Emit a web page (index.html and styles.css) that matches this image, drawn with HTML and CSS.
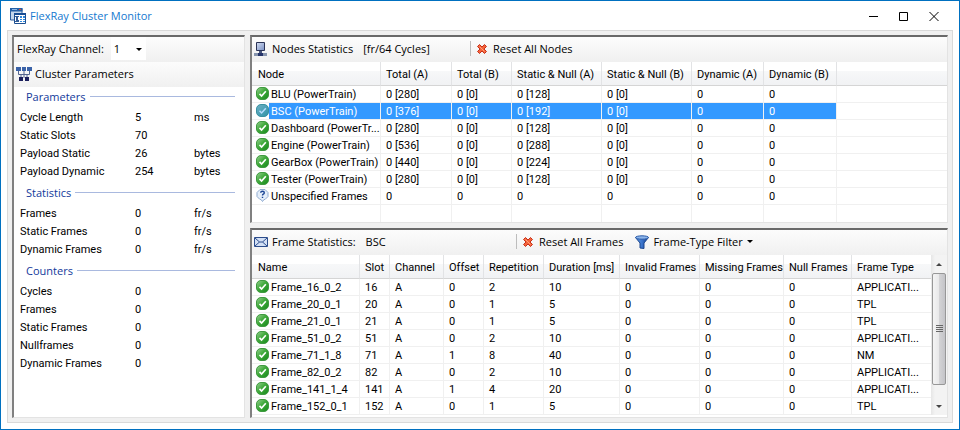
FILE: index.html
```html
<!DOCTYPE html>
<html lang="en">
<head>
<meta charset="utf-8">
<title>FlexRay Cluster Monitor</title>
<link rel="stylesheet" href="styles.css">
</head>
<body>
<svg class="sprite" aria-hidden="true">
  <defs>
    <linearGradient id="green" x1="0" y1="0" x2="1" y2="1"><stop offset="0" stop-color="#9ad295"/><stop offset=".45" stop-color="#41aa3c"/><stop offset="1" stop-color="#178a1c"/></linearGradient>
    <linearGradient id="teal" x1="0" y1="0" x2="1" y2="1"><stop offset="0" stop-color="#6db0c4"/><stop offset="1" stop-color="#2f93a8"/></linearGradient>
    <linearGradient id="funnel" x1="0" y1="0" x2="1" y2="0"><stop offset="0" stop-color="#5f9ae0"/><stop offset=".5" stop-color="#3a74cc"/><stop offset="1" stop-color="#123a88"/></linearGradient>
    <linearGradient id="screen" x1="0" y1="0" x2="1" y2="1"><stop offset="0" stop-color="#d4def2"/><stop offset="1" stop-color="#7a90c4"/></linearGradient>
  </defs>
  <symbol id="ok" viewBox="0 0 13 13"><rect x=".5" y=".5" width="12" height="12" rx="4.5" fill="url(#green)" stroke="#3f9a40"/><path d="M3.5 6.8 5.6 9 9.8 4.3" fill="none" stroke="#fff" stroke-width="1.7"/></symbol>
  <symbol id="ok-selected" viewBox="0 0 13 13"><rect x=".5" y=".5" width="12" height="12" rx="4.5" fill="url(#teal)" stroke="#3a91a0"/><path d="M3.5 6.8 5.6 9 9.8 4.3" fill="none" stroke="#b5dcff" stroke-width="1.5"/></symbol>
  <symbol id="unknown" viewBox="0 0 13 13"><path d="M4 .5h5l3 3v4l-3 3H8L6.5 12.5 5 10.500H4l-3-3v-4z" fill="#e4eefa" stroke="#8fabd0"/><path d="M4.700 3.800q0-1.600 1.800-1.600t1.800 1.500q0 .9-1 1.500-.8.500-.8 1.400M6.500 7.800v1.300" fill="none" stroke="#1c4796" stroke-width="1.400"/></symbol>
  <symbol id="cross" viewBox="0 0 10 10"><path d="M2.500 .5 5 3 7.500 .5 9.500 2.500 7 5 9.500 7.500 7.500 9.500 5 7 2.500 9.500 .5 7.500 3 5 .5 2.500z" fill="#f4623a" stroke="#c4301a"/><path d="M2.500 2.500 7.500 7.500" stroke="#ffa27a"/></symbol>
</svg>

<main class="window">
  <header class="titlebar">
    <svg class="app-icon" viewBox="0 0 16 16" aria-hidden="true">
      <path d="M.5.500h11.500v11.500H.5z" fill="#c3d6ec" stroke="#2c5e9e"/><path d="M0 0h12.500v3.500H0z" fill="#2460a6"/><path d="M2 1h5v1H2z" fill="#8fb9e6"/><path d="M9 1h2v1H9z" fill="#e0482c"/>
      <path d="M4.500 5.500h11v10h-11z" fill="#fff" stroke="#1c4f91"/><path d="M4 5h12v2H4z" fill="#174d94"/><path d="M5 8h4v1H8v3h1v2H5v-1h1V9H5z" fill="#315d98"/>
      <path d="M10 8h2v2h-2zM13 8h2v2h-2zM10 11h2v1h-2zM13 11h2v1h-2zM10 13h2v1h-2zM13 13h2v1h-2z" fill="#2c87dc"/>
    </svg>
    <h1 class="title">FlexRay Cluster Monitor</h1>
    <div class="window-buttons">
      <button type="button" aria-label="Minimize"><svg viewBox="0 0 10 10"><path d="M0 5.500h9"/></svg></button>
      <button type="button" aria-label="Maximize"><svg viewBox="0 0 10 10"><path d="M.5 1.500h8v8h-8z"/></svg></button>
      <button type="button" aria-label="Close"><svg viewBox="0 0 10 10"><path d="M.5 1 9.500 10M9.500 1 .5 10"/></svg></button>
    </div>
  </header>

  <div class="client">
    <aside class="panel">
      <div class="toolbar channel-bar">
        <label for="channel">FlexRay Channel:</label>
        <span class="select"><select id="channel"><option>1</option><option>2</option></select></span>
      </div>
      <div class="toolbar">
        <svg class="icon16" viewBox="0 0 16 14" aria-hidden="true"><path d="M2.500 4v3.500h11V4M8 4v7M5 7v4M11 7v4" fill="none" stroke="#54658f"/><path d="M0 0h5v4H0zM6 0h4v4H6zM11 0h5v4h-5z" fill="#3a62a8"/><path d="M3 10h4v4H3zM9 10h4v4H9z" fill="#1b1f5c"/></svg>
        <h2>Cluster Parameters</h2>
      </div>
      <section class="group">
        <h3>Parameters</h3>
        <table class="values">
          <tr><th scope="row">Cycle Length</th><td>5</td><td>ms</td></tr>
          <tr><th scope="row">Static Slots</th><td>70</td><td></td></tr>
          <tr><th scope="row">Payload Static</th><td>26</td><td>bytes</td></tr>
          <tr><th scope="row">Payload Dynamic</th><td>254</td><td>bytes</td></tr>
        </table>
      </section>
      <section class="group">
        <h3>Statistics</h3>
        <table class="values">
          <tr><th scope="row">Frames</th><td>0</td><td>fr/s</td></tr>
          <tr><th scope="row">Static Frames</th><td>0</td><td>fr/s</td></tr>
          <tr><th scope="row">Dynamic Frames</th><td>0</td><td>fr/s</td></tr>
        </table>
      </section>
      <section class="group">
        <h3>Counters</h3>
        <table class="values">
          <tr><th scope="row">Cycles</th><td>0</td><td></td></tr>
          <tr><th scope="row">Frames</th><td>0</td><td></td></tr>
          <tr><th scope="row">Static Frames</th><td>0</td><td></td></tr>
          <tr><th scope="row">Nullframes</th><td>0</td><td></td></tr>
          <tr><th scope="row">Dynamic Frames</th><td>0</td><td></td></tr>
        </table>
      </section>
    </aside>

    <div class="right">
      <section class="panel">
        <div class="toolbar">
          <div class="caption caption-nodes">
            <svg class="icon14" viewBox="0 0 14 14" aria-hidden="true"><path d="M2.500.500h8v8h-8z" fill="url(#screen)" stroke="#2b3356"/><path d="M5 9h3v2H5z" fill="#4a577c"/><path d="M0 11h13v3H0z" fill="#8795ae"/><path d="M4 11h5v3H4z" fill="#26356a"/></svg>
            <h2>Nodes Statistics</h2><span>[fr/64 Cycles]</span>
          </div>
          <button type="button" class="tool"><svg class="icon10" aria-hidden="true"><use href="#cross"/></svg>Reset All Nodes</button>
        </div>
        <div class="list">
          <table class="grid">
            <colgroup><col class="w129"><col class="w71"><col class="w60"><col class="w90"><col class="w90"><col class="w72"><col class="w73"><col></colgroup>
            <thead><tr><th>Node</th><th>Total (A)</th><th>Total (B)</th><th>Static &amp; Null (A)</th><th>Static &amp; Null (B)</th><th>Dynamic (A)</th><th>Dynamic (B)</th><th></th></tr></thead>
            <tbody>
              <tr><td><svg><use href="#ok"/></svg>BLU (PowerTrain)</td><td>0 [280]</td><td>0 [0]</td><td>0 [128]</td><td>0 [0]</td><td>0</td><td>0</td><td></td></tr>
              <tr class="selected"><td><svg><use href="#ok-selected"/></svg>BSC (PowerTrain)</td><td>0 [376]</td><td>0 [0]</td><td>0 [192]</td><td>0 [0]</td><td>0</td><td>0</td><td></td></tr>
              <tr><td><svg><use href="#ok"/></svg>Dashboard (PowerTr...</td><td>0 [280]</td><td>0 [0]</td><td>0 [128]</td><td>0 [0]</td><td>0</td><td>0</td><td></td></tr>
              <tr><td><svg><use href="#ok"/></svg>Engine (PowerTrain)</td><td>0 [536]</td><td>0 [0]</td><td>0 [288]</td><td>0 [0]</td><td>0</td><td>0</td><td></td></tr>
              <tr><td><svg><use href="#ok"/></svg>GearBox (PowerTrain)</td><td>0 [440]</td><td>0 [0]</td><td>0 [224]</td><td>0 [0]</td><td>0</td><td>0</td><td></td></tr>
              <tr><td><svg><use href="#ok"/></svg>Tester (PowerTrain)</td><td>0 [280]</td><td>0 [0]</td><td>0 [128]</td><td>0 [0]</td><td>0</td><td>0</td><td></td></tr>
              <tr><td><svg><use href="#unknown"/></svg>Unspecified Frames</td><td>0</td><td>0</td><td>0</td><td>0</td><td>0</td><td>0</td><td></td></tr>
              <tr class="filler"><td></td><td></td><td></td><td></td><td></td><td></td><td></td><td></td></tr>
            </tbody>
          </table>
        </div>
      </section>

      <section class="panel">
        <div class="toolbar">
          <div class="caption caption-frames">
            <svg class="icon14" viewBox="0 0 14 14" aria-hidden="true"><path d="M.5 2.500h13v9H.5z" fill="#d3e0f5" stroke="#2c4d8c"/><path d="M1 3l4.500 4h3L13 3M1 11l4.500-4M13 11 8.500 7" fill="none" stroke="#2c4d8c"/></svg>
            <h2>Frame Statistics:</h2><span>BSC</span>
          </div>
          <button type="button" class="tool"><svg class="icon10" aria-hidden="true"><use href="#cross"/></svg>Reset All Frames</button>
          <button type="button" class="tool filter"><svg class="icon14" viewBox="0 0 14 14" aria-hidden="true"><path d="M.5 2.500 5 8v5l4 .5V8l4.500-5.500z" fill="url(#funnel)" stroke="#1c468e"/><ellipse cx="7" cy="2.500" rx="6.500" ry="1.700" fill="#8db5ea" stroke="#2a5aa8"/></svg>Frame-Type Filter<i class="caret"></i></button>
        </div>
        <div class="list list-scroll">
          <table class="grid">
            <colgroup><col class="w108"><col class="w30"><col class="w54"><col class="w40"><col class="w60"><col class="w76"><col class="w80"><col class="w84"><col class="w68"><col></colgroup>
            <thead><tr><th>Name</th><th>Slot</th><th>Channel</th><th>Offset</th><th>Repetition</th><th>Duration [ms]</th><th>Invalid Frames</th><th>Missing Frames</th><th>Null Frames</th><th>Frame Type</th></tr></thead>
            <tbody>
              <tr><td><svg><use href="#ok"/></svg>Frame_16_0_2</td><td>16</td><td>A</td><td>0</td><td>2</td><td>10</td><td>0</td><td>0</td><td>0</td><td>APPLICATI...</td></tr>
              <tr><td><svg><use href="#ok"/></svg>Frame_20_0_1</td><td>20</td><td>A</td><td>0</td><td>1</td><td>5</td><td>0</td><td>0</td><td>0</td><td>TPL</td></tr>
              <tr><td><svg><use href="#ok"/></svg>Frame_21_0_1</td><td>21</td><td>A</td><td>0</td><td>1</td><td>5</td><td>0</td><td>0</td><td>0</td><td>TPL</td></tr>
              <tr><td><svg><use href="#ok"/></svg>Frame_51_0_2</td><td>51</td><td>A</td><td>0</td><td>2</td><td>10</td><td>0</td><td>0</td><td>0</td><td>APPLICATI...</td></tr>
              <tr><td><svg><use href="#ok"/></svg>Frame_71_1_8</td><td>71</td><td>A</td><td>1</td><td>8</td><td>40</td><td>0</td><td>0</td><td>0</td><td>NM</td></tr>
              <tr><td><svg><use href="#ok"/></svg>Frame_82_0_2</td><td>82</td><td>A</td><td>0</td><td>2</td><td>10</td><td>0</td><td>0</td><td>0</td><td>APPLICATI...</td></tr>
              <tr><td><svg><use href="#ok"/></svg>Frame_141_1_4</td><td>141</td><td>A</td><td>1</td><td>4</td><td>20</td><td>0</td><td>0</td><td>0</td><td>APPLICATI...</td></tr>
              <tr><td><svg><use href="#ok"/></svg>Frame_152_0_1</td><td>152</td><td>A</td><td>0</td><td>1</td><td>5</td><td>0</td><td>0</td><td>0</td><td>TPL</td></tr>
            </tbody>
          </table>
          <div class="scrollbar" aria-hidden="true">
            <span class="arrow arrow-up"></span>
            <span class="thumb"><i></i><i></i><i></i><i></i></span>
            <span class="track"></span>
            <span class="arrow arrow-down"></span>
          </div>
        </div>
      </section>
    </div>
  </div>
</main>
</body>
</html>
```
FILE: styles.css
```css
* { box-sizing: border-box; }

body {
  margin: 0;
  font: 11px/16px Roboto, "Liberation Sans", sans-serif;
  color: #000;
}

h1, h2, h3 { margin: 0; font: inherit; }
button, select { font: inherit; color: inherit; border: 0; background: none; padding: 0; }

.sprite { position: absolute; width: 0; height: 0; }

.window {
  display: flex;
  flex-direction: column;
  height: 100vh;
  min-height: 430px;
  border: 1px solid #0070c0;
  background: #fff;
}

.titlebar {
  display: flex;
  align-items: center;
  gap: 4px;
  height: 29px;
  padding: 0 20px 0 9px;
}

.app-icon { width: 16px; height: 16px; }

.title {
  flex: 1;
  font: 11px/16px "Open Sans", sans-serif;
  color: #1479cf;
}

.window-buttons { display: flex; gap: 20px; }
.window-buttons button { display: flex; }
.window-buttons svg { width: 10px; height: 10px; fill: none; stroke: #000; overflow: visible; }

.client {
  flex: 1;
  display: grid;
  grid-template-columns: 233px minmax(0, 1fr);
  gap: 5px;
  min-height: 0;
  margin: 0 6px 6px;
  padding: 4px;
  border: 1px solid #d9d9d9;
  background: #f0f0f0;
}

.right {
  display: grid;
  grid-template-rows: minmax(0, 1fr) auto;
  gap: 5px;
  min-height: 0;
}

.panel {
  display: flex;
  flex-direction: column;
  min-width: 0;
  overflow: hidden;
  background: #fff;
  border-style: solid;
  border-width: 2px 1px 1px 2px;
  border-color: #696969 #e3e3e3 #e3e3e3 #808080;
}

.toolbar {
  flex: none;
  display: flex;
  align-items: center;
  gap: 3px;
  height: 25px;
  padding: 0 2px 2px;
  font: 11px/16px "Open Sans", sans-serif;
  background: linear-gradient(#fcfcfc, #f0f0f0);
}

.icon16 { width: 16px; height: 14px; }
.icon14 { width: 14px; height: 14px; }
.icon10 { width: 10px; height: 10px; }

.channel-bar { gap: 7px; padding-left: 3px; }

.select { position: relative; width: 35px; height: 23px; background: #fff; }
.select select { appearance: none; width: 100%; height: 100%; padding-left: 3px; }
.select::after {
  content: "";
  position: absolute;
  right: 4px;
  top: 11px;
  border: 3px solid transparent;
  border-top-color: #000;
  border-bottom: 0;
  pointer-events: none;
}

.caption { display: flex; align-items: center; gap: 4px; height: 15px; border-right: 1px solid #bdbdbd; }
.caption-nodes { width: 217px; }
.caption-frames { width: 263px; }
.caption span { margin-left: 6px; }

.tool { display: flex; align-items: center; gap: 6px; padding: 0 3px; }
.filter { gap: 4px; margin-left: 3px; }
.caret { border: 3px solid transparent; border-top-color: #000; border-bottom: 0; }

.group { padding: 0 9px 3px 6px; }
.group h3 {
  display: flex;
  align-items: center;
  gap: 4px;
  height: 21px;
  padding: 0 0 2px 6px;
  font: 11px/16px "Open Sans", sans-serif;
  color: #12399b;
}
.group h3::after { content: ""; flex: 1; height: 1px; background: #a9b9df; }

.values { width: 100%; table-layout: fixed; border-spacing: 0; }
.values tr { height: 18px; }
.values th { width: 115px; padding: 2px 0 0; font-weight: normal; text-align: left; }
.values td { width: 59px; padding: 2px 0 0; }
.values td:last-child { width: auto; }

.list { flex: 1; display: flex; min-height: 0; align-items: flex-start; overflow: hidden; }
.list-scroll { align-items: stretch; padding-bottom: 2px; }
.list-scroll .grid { flex: 1; min-width: 0; align-self: flex-start; }

.grid { width: 100%; table-layout: fixed; border-spacing: 0; }
.grid th {
  height: 24px;
  padding: 2px 0 0 5px;
  font-weight: normal;
  text-align: left;
  white-space: nowrap;
  border-right: 1px solid #e2e3e5;
  border-bottom: 1px solid #d5d5d5;
  background: linear-gradient(#fff 9px, #f7f8f9 9px, #f1f2f4);
}
.grid td {
  height: 17px;
  padding: 2px 0 0 5px;
  line-height: 14px;
  white-space: nowrap;
  overflow: hidden;
  border-right: 1px solid #f0f0f0;
  border-bottom: 1px solid #f0f0f0;
}
.grid th:first-child { padding-left: 6px; }
.grid th:last-child, .grid td:last-child { border-right: 0; }
.grid td:first-child { padding-left: 4px; }
.grid td svg { display: inline-block; width: 13px; height: 13px; margin: -1px 2px 0 0; vertical-align: -2px; }
.filler td { border-bottom: 0; }

.selected td { color: #fff; background: #39f; }
.selected td:first-child { background: linear-gradient(90deg, #fff 17px, #39f 17px); }
.selected td:last-child { background: none; }

.w129 { width: 129px; }
.w108 { width: 108px; }
.w90 { width: 90px; }
.w84 { width: 84px; }
.w80 { width: 80px; }
.w76 { width: 76px; }
.w73 { width: 73px; }
.w72 { width: 72px; }
.w71 { width: 71px; }
.w68 { width: 68px; }
.w60 { width: 60px; }
.w54 { width: 54px; }
.w40 { width: 40px; }
.w30 { width: 30px; }

.scrollbar {
  flex: none;
  display: flex;
  flex-direction: column;
  width: 16px;
  background: linear-gradient(90deg, #e6e6e6, #f3f3f3 4px, #f3f3f3);
}
.arrow { display: grid; place-items: center; height: 18px; }
.arrow::before { content: ""; border: 3px solid transparent; }
.arrow-up::before { border-top: 0; border-bottom-color: #444; }
.arrow-down::before { border-bottom: 0; border-top-color: #444; }
.thumb {
  flex: 9;
  display: flex;
  flex-direction: column;
  align-items: center;
  justify-content: center;
  gap: 1px;
  margin: 0 1px;
  border: 1px solid #979797;
  border-radius: 2px;
  background: linear-gradient(90deg, #f4f4f4, #e8e8e9 50%, #d4d4d6 50%, #c4c4c8);
}
.thumb i { width: 7px; height: 1px; background: #666; }
.track { flex: 1; }
```
